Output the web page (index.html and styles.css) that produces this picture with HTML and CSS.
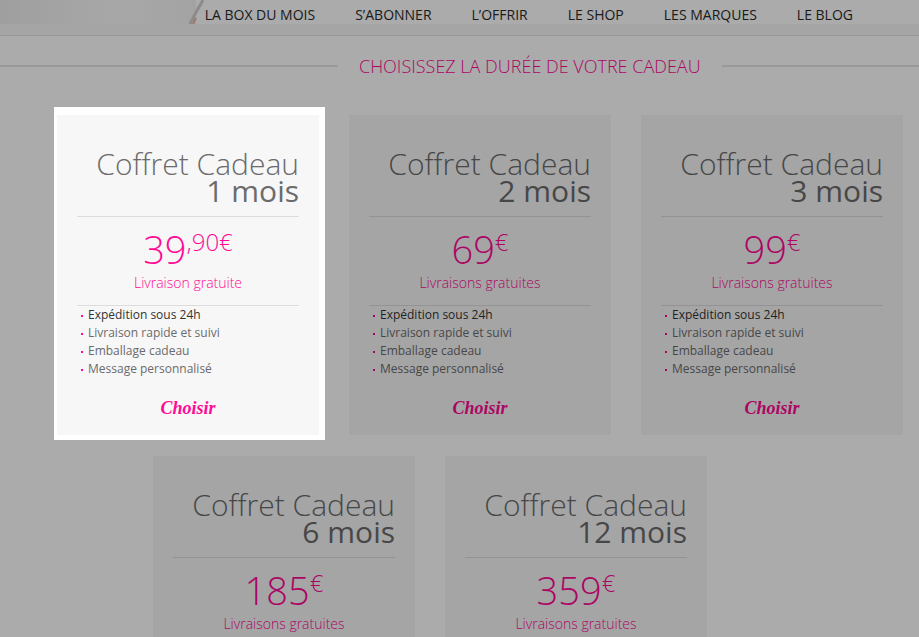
FILE: index.html
```html
<!DOCTYPE html>
<html lang="fr">

<head>
    <meta charset="UTF-8">
    <meta name="viewport" content="width=device-width, initial-scale=1.0">
    <title>Offrir la box - Choisissez la durée</title>
    <link rel="stylesheet" href="styles.css">
</head>

<body>

    <header class="site-header">
        <div class="header-top">
            <!-- bas de la photo d'accueil -->
            <div class="hero-strip">
                <svg width="205" height="24" viewBox="0 0 205 24">
                    <defs>
                        <linearGradient id="hero-fade" x1="0" y1="0" x2="1" y2="0">
                            <stop offset="0" stop-color="#ededed" />
                            <stop offset="0.6" stop-color="#fafafa" />
                            <stop offset="1" stop-color="#f4f4f4" />
                        </linearGradient>
                    </defs>
                    <rect width="196" height="24" fill="url(#hero-fade)" />
                    <path d="M203 0 Q196 12 190 24" stroke="#cfcfcf" stroke-width="3" fill="none" />
                    <path d="M196 18 L193 24" stroke="#e8b49c" stroke-width="2" fill="none" />
                </svg>
            </div>
            <nav class="main-nav">
                <a href="#">LA BOX DU MOIS</a>
                <a href="#">S’ABONNER</a>
                <a href="#">L’OFFRIR</a>
                <a href="#">LE SHOP</a>
                <a href="#">LES MARQUES</a>
                <a href="#">LE BLOG</a>
            </nav>
        </div>
        <div class="header-bottom"></div>
    </header>

    <section class="gift">
        <h2 class="section-title">
            <span class="line"></span>
            <span class="text">Choisissez la durée de votre cadeau</span>
            <span class="line"></span>
        </h2>

        <div class="offers">
            <div class="offers-row">
                <div class="offer is-highlighted">
                    <h3 class="offer-title">Coffret Cadeau <strong>1 mois</strong></h3>
                    <p class="offer-price">39<sup>,90€</sup></p>
                    <p class="offer-delivery">Livraison gratuite</p>
                    <ul class="offer-features">
                        <li>Expédition sous 24h</li>
                        <li>Livraison rapide et suivi</li>
                        <li>Emballage cadeau</li>
                        <li>Message personnalisé</li>
                    </ul>
                    <a class="offer-choose" href="#">Choisir</a>
                </div>

                <div class="offer">
                    <h3 class="offer-title">Coffret Cadeau <strong>2 mois</strong></h3>
                    <p class="offer-price">69<sup>€</sup></p>
                    <p class="offer-delivery">Livraisons gratuites</p>
                    <ul class="offer-features">
                        <li>Expédition sous 24h</li>
                        <li>Livraison rapide et suivi</li>
                        <li>Emballage cadeau</li>
                        <li>Message personnalisé</li>
                    </ul>
                    <a class="offer-choose" href="#">Choisir</a>
                </div>

                <div class="offer">
                    <h3 class="offer-title">Coffret Cadeau <strong>3 mois</strong></h3>
                    <p class="offer-price">99<sup>€</sup></p>
                    <p class="offer-delivery">Livraisons gratuites</p>
                    <ul class="offer-features">
                        <li>Expédition sous 24h</li>
                        <li>Livraison rapide et suivi</li>
                        <li>Emballage cadeau</li>
                        <li>Message personnalisé</li>
                    </ul>
                    <a class="offer-choose" href="#">Choisir</a>
                </div>
            </div>

            <div class="offers-row second">
                <div class="offer">
                    <h3 class="offer-title">Coffret Cadeau <strong>6 mois</strong></h3>
                    <p class="offer-price">185<sup>€</sup></p>
                    <p class="offer-delivery">Livraisons gratuites</p>
                    <ul class="offer-features">
                        <li>Expédition sous 24h</li>
                        <li>Livraison rapide et suivi</li>
                        <li>Emballage cadeau</li>
                        <li>Message personnalisé</li>
                    </ul>
                    <a class="offer-choose" href="#">Choisir</a>
                </div>

                <div class="offer">
                    <h3 class="offer-title">Coffret Cadeau <strong>12 mois</strong></h3>
                    <p class="offer-price">359<sup>€</sup></p>
                    <p class="offer-delivery">Livraisons gratuites</p>
                    <ul class="offer-features">
                        <li>Expédition sous 24h</li>
                        <li>Livraison rapide et suivi</li>
                        <li>Emballage cadeau</li>
                        <li>Message personnalisé</li>
                    </ul>
                    <a class="offer-choose" href="#">Choisir</a>
                </div>
            </div>
        </div>
    </section>

    <!-- visite guidée : fond assombri, l'offre active passe au-dessus -->
    <div class="tour-overlay"></div>

</body>

</html>
```

FILE: styles.css
```css
* {
    box-sizing: border-box;
}

body {
    margin: 0;
    font-family: "Open Sans", "Liberation Sans", sans-serif;
    background-color: #ffffff;
    color: #6b6b6b;
}

/* en-tête */
.site-header {
    border-bottom: 1px solid #e2e2e2;
}

.header-top {
    display: flex;
    height: 24px;
}

.hero-strip {
    flex: 1;
    min-width: 0;
    overflow: hidden;
}

.hero-strip svg {
    display: block;
}

.main-nav {
    display: flex;
    align-items: flex-end;
    gap: 40px;
    padding-right: 66px;
}

.main-nav a {
    color: #2b2b2b;
    text-decoration: none;
    font-size: 14px;
    line-height: 19px;
    white-space: nowrap;
}

.header-bottom {
    height: 11px;
    background-color: #f6f6f6;
}

/* titre de section */
.section-title {
    display: grid;
    grid-template-columns: 338px auto 1fr;
    column-gap: 21px;
    align-items: center;
    margin: 18px 0 0;
    font-size: 18px;
    line-height: 24px;
    font-weight: 300;
    color: #ff0a96;
    text-transform: uppercase;
    white-space: nowrap;
}

.section-title .line {
    height: 2px;
    background-color: #e4e4e4;
}

/* offres */
.offers {
    display: flex;
    flex-direction: column;
    gap: 21px;
    margin-top: 37px;
}

.offers-row {
    display: flex;
    gap: 30px;
    padding-left: 57px;
}

.offers-row.second {
    padding-left: 153px;
}

.offer {
    width: 262px;
    flex: none;
    background-color: rgba(0, 0, 0, 0.03);
    padding: 35px 20px 15px;
}

.offer-title {
    margin: 0;
    text-align: right;
    font-size: 30px;
    line-height: 28px;
    font-weight: 300;
    color: #6b6b6b;
}

.offer-title strong {
    display: block;
    margin-top: -1px;
    font-weight: 400;
}

.offer-price {
    margin: 11px 0 0;
    padding-top: 13px;
    border-top: 1px solid #dcdcdc;
    text-align: center;
    font-size: 38px;
    line-height: 38px;
    font-weight: 300;
    color: #ff0a96;
}

.offer-price sup {
    font-size: 24px;
    line-height: 0;
    vertical-align: 13px;
}

.offer-delivery {
    margin: 5px 0 0;
    padding-bottom: 12px;
    border-bottom: 1px solid #dcdcdc;
    text-align: center;
    font-size: 14px;
    line-height: 20px;
    font-weight: 300;
    color: #ff0a96;
}

.offer-features {
    list-style-type: none;
    margin: 0;
    padding: 0;
    font-size: 12px;
    line-height: 18px;
    color: #6b6b6b;
}

.offer-features li:first-child {
    color: #333333;
}

.offer-features li::before {
    content: "";
    display: inline-block;
    width: 2px;
    height: 2px;
    margin: 0 5px 0 4px;
    vertical-align: middle;
    background-color: #ff0a96;
}

.offer-choose {
    display: block;
    margin-top: 18px;
    text-align: center;
    font-family: "Liberation Serif", serif;
    font-style: italic;
    font-weight: bold;
    font-size: 18px;
    line-height: 24px;
    color: #ff0a96;
    text-decoration: none;
}

/* visite guidée */
.tour-overlay {
    position: fixed;
    inset: 0;
    z-index: 5;
    background-color: rgba(0, 0, 0, 0.33);
}

.offer.is-highlighted {
    position: relative;
    z-index: 10;
    background: none;
}

/* cadre blanc autour de l'offre active */
.offer.is-highlighted::before {
    content: "";
    position: absolute;
    inset: -8px -6px -5px -3px;
    z-index: -2;
    background-color: #ffffff;
}

.offer.is-highlighted::after {
    content: "";
    position: absolute;
    inset: 0;
    z-index: -1;
    background-color: rgba(0, 0, 0, 0.03);
}
```
